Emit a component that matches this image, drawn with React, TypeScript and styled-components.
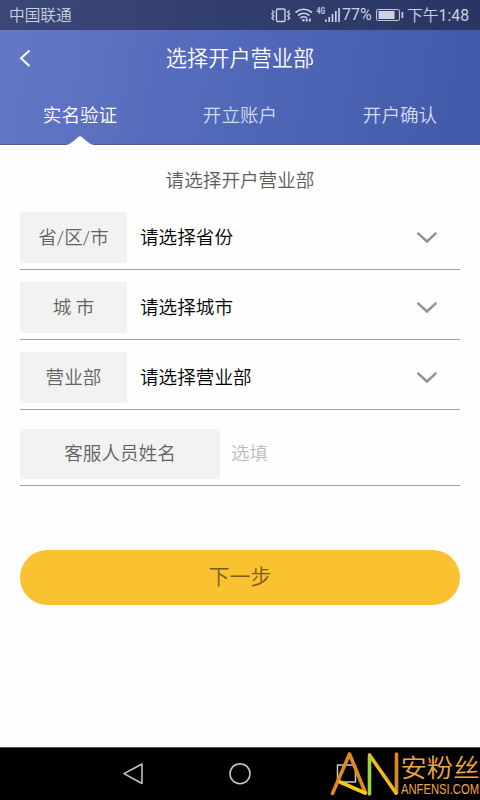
import React from 'react';
import styled, { createGlobalStyle } from 'styled-components';

const GlobalStyle = createGlobalStyle`
  * { box-sizing: border-box; }
  body {
    margin: 0;
    background: #fff;
    font-family: Roboto, "Noto Sans CJK SC", sans-serif;
    font-weight: 350;
  }
  button, input { font: inherit; border: 0; background: none; padding: 0; }
`;

const Screen = styled.div`
  display: flex;
  flex-direction: column;
  width: 480px;
  height: 800px;
  overflow: hidden;
  background: #fefefe;
`;

const Top = styled.div`
  flex: none;
  height: 145px;
  background: linear-gradient(100deg, #6478c6 0%, #5268b8 48%, #4258a9 100%);
  border-bottom: 1px solid #4d5a90;
`;

const StatusBar = styled.div`
  display: flex;
  align-items: center;
  height: 30px;
  padding: 0 11px 0 9px;
  background: linear-gradient(100deg, #3c4877 0%, #323e6e 48%, #283565 100%);
  color: #ccd0e3;
  line-height: 30px;
`;

const Carrier = styled.span`
  flex: 1;
  padding-top: 2px;
  font-size: 15.7px;
`;

const StatusIcons = styled.svg`
  display: block;
  width: 70px;
  height: 30px;
`;

const Percent = styled.span`
  width: 33px;
  margin-left: 1.5px;
  font-size: 16px;
  font-weight: 400;
  white-space: nowrap;
`;

const Battery = styled.svg`
  display: block;
  width: 32px;
  height: 30px;
`;

const Clock = styled.span`
  width: 62px;
  font-size: 15.8px;
  white-space: nowrap;
  padding-top: 2px;
`;

const Digits = styled.span`
  font-weight: 400;
`;

const TitleBar = styled.header`
  display: grid;
  grid-template-columns: 60px 1fr 60px;
  align-items: center;
  height: 56px;
  color: #fff;
`;

const Back = styled.button`
  display: block;
  width: 50px;
  height: 56px;
  svg { display: block; }
`;

const Title = styled.h1`
  margin: 0;
  padding-top: 2px;
  font-size: 21.2px;
  font-weight: 350;
  line-height: 54px;
  text-align: center;
`;

const Tabs = styled.nav`
  display: grid;
  grid-template-columns: repeat(3, 1fr);
  height: 59px;
`;

const Tab = styled.div<{ $active?: boolean }>`
  display: flex;
  flex-direction: column;
  align-items: center;
  justify-content: space-between;
  color: ${p => (p.$active ? '#fff' : '#d3daf5')};
  font-size: 18.6px;
  line-height: 60px;
  height: 59px;
`;

const TabLabel = styled.span`
  height: 50px;
`;

const Notch = styled.svg`
  display: block;
  width: 28px;
  height: 9px;
`;

const Form = styled.main`
  flex: 1;
  padding: 0 20px;
  font-size: 18.6px;
`;

const Prompt = styled.p`
  margin: 0;
  padding-top: 17px;
  height: 67px;
  line-height: 38px;
  text-align: center;
  color: #5c5c5c;
`;

const Row = styled.div<{ $last?: boolean }>`
  display: flex;
  height: ${p => (p.$last ? '57px' : '58px')};
  margin-bottom: ${p => (p.$last ? '0' : '12px')};
  margin-top: ${p => (p.$last ? '19px' : '0')};
  border-bottom: 1px solid #a2a2a2;
`;

const Label = styled.div<{ $wide?: boolean }>`
  width: ${p => (p.$wide ? '200px' : '107px')};
  height: ${p => (p.$wide ? '50px' : '51px')};
  line-height: ${p => (p.$wide ? '50px' : '52px')};
  background: #f2f2f2;
  color: #636363;
  text-align: center;
`;

const Value = styled.div`
  flex: 1;
  padding-left: 13px;
  line-height: 52px;
  color: #000;
`;

const Chevron = styled.svg`
  display: block;
  width: 22px;
  height: 50px;
  margin-right: 22px;
`;

const Optional = styled.input`
  width: 200px;
  height: 50px;
  margin-left: 11px;
  outline: none;
  &::placeholder { color: #bdbdbd; opacity: 1; }
`;

const Next = styled.button`
  display: block;
  width: 440px;
  height: 55px;
  margin-top: 64px;
  padding-bottom: 5px;
  border-radius: 28px;
  background: #fac131;
  color: #7a5a1e;
  font-size: 21px;
`;

const NavBar = styled.footer`
  flex: none;
  display: flex;
  height: 53px;
  background: #000;
  border-top: 1px solid #555;
  svg { display: block; }
`;

const fields = [
  { label: '省/区/市', value: '请选择省份' },
  { label: '城 市', value: '请选择城市' },
  { label: '营业部', value: '请选择营业部' },
];

export default function App() {
  return (
    <Screen>
      <GlobalStyle />
      <Top>
        <StatusBar>
          <Carrier>中国联通</Carrier>
          <StatusIcons viewBox="270 0 70 30" fill="none" stroke="#ccd0e3">
            <rect x="275.5" y="9" width="8.5" height="12.5" rx="1" strokeWidth="1.4" />
            <path d="M270.9 10.500l2 1.500-2 2 2 2-2 2 2 2M288.700 10.500l-2 1.500 2 2-2 2 2 2-2 2" strokeWidth="1.3" />
            <path d="M294.5 12.500Q302.700 6 311 12.500M297 15.500Q302.700 11 308.500 15.500M299.300 18Q302.700 15.500 306 18" strokeWidth="1.6" />
            <circle cx="302.5" cy="20.3" r="1.2" fill="#ccd0e3" stroke="none" />
            <path d="M305.7 18.500v3M308.800 18.500v3" strokeWidth="1.8" />
            <text x="315.5" y="14" fill="#ccd0e3" stroke="none" fontSize="8.5" fontWeight="700" textLength="8.5" lengthAdjust="spacingAndGlyphs">4G</text>
            <path d="M324.800 19.500v2.500M328.200 17v5M331.500 14v8M334.800 11v11M338 8v14" strokeWidth="1.7" />
          </StatusIcons>
          <Percent>77%</Percent>
          <Battery viewBox="373 0 32 30">
            <rect x="374.5" y="9.5" width="23" height="11" rx="1.5" fill="none" stroke="#bfc3dc" />
            <rect x="376.5" y="11" width="16" height="8" fill="#ccd0e3" />
            <rect x="399.5" y="12" width="1.7" height="6" fill="#ccd0e3" />
          </Battery>
          <Clock>下午<Digits>1:48</Digits></Clock>
        </StatusBar>
        <TitleBar>
          <Back aria-label="返回">
            <svg width="50" height="56" viewBox="0 30 50 56" fill="none" stroke="#fff" strokeWidth="2">
              <path d="M29.500 50.500L21 58.300L29.500 66" />
            </svg>
          </Back>
          <Title>选择开户营业部</Title>
        </TitleBar>
        <Tabs>
          <Tab $active>
            <TabLabel>实名验证</TabLabel>
            <Notch viewBox="0 0 28 9">
              <path d="M0 9Q4 8.500 7 5.500L12.500 0.800Q14 -0.300 15.500 0.800L21 5.500Q24 8.500 28 9Z" fill="#fff" />
            </Notch>
          </Tab>
          <Tab><TabLabel>开立账户</TabLabel></Tab>
          <Tab><TabLabel>开户确认</TabLabel></Tab>
        </Tabs>
      </Top>
      <Form>
        <Prompt>请选择开户营业部</Prompt>
        {fields.map(f => (
          <Row key={f.label}>
            <Label>{f.label}</Label>
            <Value>{f.value}</Value>
            <Chevron viewBox="0 0 22 50" fill="none" stroke="#929292" strokeWidth="2.5">
              <path d="M1.500 20.800L11 29.500L20.300 20.800" />
            </Chevron>
          </Row>
        ))}
        <Row $last>
          <Label $wide>客服人员姓名</Label>
          <Optional placeholder="选填" />
        </Row>
        <Next>下一步</Next>
      </Form>
      <NavBar>
        <svg width="480" height="52" viewBox="0 748 480 52" fill="none">
          <g stroke="#c9c9c9" strokeWidth="1.5" strokeLinejoin="round">
            <path d="M142 764v19.500L124 773.700Z" />
            <circle cx="240" cy="773.7" r="10" />
            <rect x="337.5" y="765" width="18" height="17" />
          </g>
          <g strokeWidth="3.6" strokeLinecap="round">
            <path d="M332.500 793.500L349.500 754L365.500 793" stroke="#e08a1e" strokeLinejoin="round" />
            <path d="M340 782L365 793" stroke="#fbc80c" />
            <path d="M396.500 754V793" stroke="#dc8a1d" />
            <path d="M369.500 755L396 793" stroke="#f3b81b" />
            <path d="M369.500 757V794" stroke="#9bd63f" />
          </g>
          <g fill="#f0a640">
            <text x="400.5" y="777" fontSize="25" fontWeight="350" textLength="79" lengthAdjust="spacingAndGlyphs">安粉丝</text>
            <text x="401" y="794" fontFamily="Liberation Sans, sans-serif" fontSize="14" fontWeight="400" textLength="78" lengthAdjust="spacingAndGlyphs">ANFENSI.COM</text>
          </g>
        </svg>
      </NavBar>
    </Screen>
  );
}
